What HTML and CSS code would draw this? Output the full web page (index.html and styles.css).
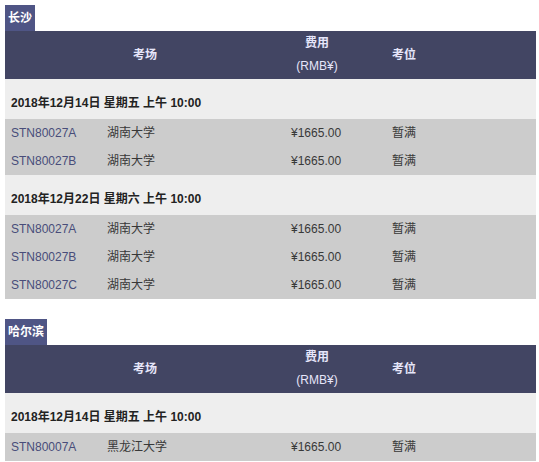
FILE: index.html
```html
<!DOCTYPE html>
<html lang="zh-CN">
<head>
<meta charset="utf-8">
<title>考位查询</title>
<link rel="stylesheet" href="styles.css">
</head>
<body>
<section class="city">
  <div class="city-tag">长沙</div>
  <table class="seats">
    <colgroup><col class="c-code"><col class="c-name"><col class="c-fee"><col class="c-seat"></colgroup>
    <thead>
      <tr><th colspan="2" class="th-center">考场</th><th class="th-fee"><b>费用</b><br>(RMB¥)</th><th class="th-left">考位</th></tr>
    </thead>
    <tbody>
      <tr class="date"><td colspan="4">2018年12月14日 星期五 上午 10:00</td></tr>
      <tr class="row"><td class="code">STN80027A</td><td>湖南大学</td><td>¥1665.00</td><td>暂满</td></tr>
      <tr class="row"><td class="code">STN80027B</td><td>湖南大学</td><td>¥1665.00</td><td>暂满</td></tr>
      <tr class="date"><td colspan="4">2018年12月22日 星期六 上午 10:00</td></tr>
      <tr class="row"><td class="code">STN80027A</td><td>湖南大学</td><td>¥1665.00</td><td>暂满</td></tr>
      <tr class="row"><td class="code">STN80027B</td><td>湖南大学</td><td>¥1665.00</td><td>暂满</td></tr>
      <tr class="row"><td class="code">STN80027C</td><td>湖南大学</td><td>¥1665.00</td><td>暂满</td></tr>
    </tbody>
  </table>
</section>
<section class="city">
  <div class="city-tag">哈尔滨</div>
  <table class="seats">
    <colgroup><col class="c-code"><col class="c-name"><col class="c-fee"><col class="c-seat"></colgroup>
    <thead>
      <tr><th colspan="2" class="th-center">考场</th><th class="th-fee"><b>费用</b><br>(RMB¥)</th><th class="th-left">考位</th></tr>
    </thead>
    <tbody>
      <tr class="date"><td colspan="4">2018年12月14日 星期五 上午 10:00</td></tr>
      <tr class="row"><td class="code">STN80007A</td><td>黑龙江大学</td><td>¥1665.00</td><td>暂满</td></tr>
    </tbody>
  </table>
</section>
</body>
</html>
```

FILE: styles.css
```css
html, body {
  background: #ffffff;
}
body {
  margin: 5px 3px 0 5px;
  font-family: "Liberation Sans", Arial, "Noto Sans CJK SC", sans-serif;
  font-size: 12px;
  color: #333333;
}
.city {
  margin-bottom: 20px;
}
.city-tag {
  display: inline-block;
  background: #4f5585;
  color: #ffffff;
  font-weight: bold;
  font-size: 12px;
  height: 26px;
  line-height: 26px;
  padding: 0 3px;
  vertical-align: top;
}
.seats {
  width: 531px;
  border-collapse: collapse;
  table-layout: fixed;
}
.c-code { width: 96px; }
.c-name { width: 184px; }
.c-fee { width: 101px; }
.c-seat { width: 150px; }
.seats th {
  background: #424563;
  color: #e6e6fa;
  height: 48px;
  padding: 0;
  font-size: 12px;
  font-weight: bold;
  line-height: 23px;
  vertical-align: middle;
}
.th-center { text-align: center; }
.th-fee {
  text-align: center;
  font-weight: normal !important;
  padding-right: 37px !important;
}
.th-fee b { font-weight: bold; }
.th-left {
  text-align: left;
  padding-left: 6px !important;
}
.date td {
  background: #eeeeee;
  font-weight: bold;
  color: #222222;
  padding: 16px 6px 8px;
  line-height: 16px;
}
.row td {
  background: #cccccc;
  height: 28px;
  line-height: 28px;
  padding: 0 6px;
  color: #383838;
}
.row td.code {
  color: #484d7a;
}
```
